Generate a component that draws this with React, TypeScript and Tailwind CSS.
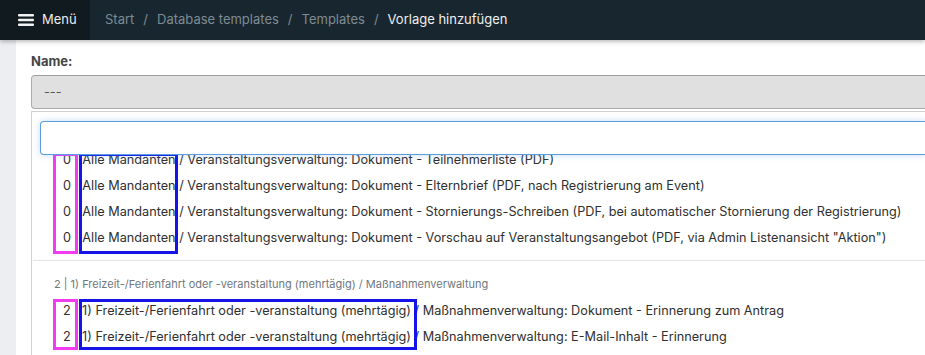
import React from "react";

const groupOne = [
  "0 | Alle Mandanten / Veranstaltungsverwaltung: Dokument - Teilnehmerliste (PDF)",
  "0 | Alle Mandanten / Veranstaltungsverwaltung: Dokument - Elternbrief (PDF, nach Registrierung am Event)",
  "0 | Alle Mandanten / Veranstaltungsverwaltung: Dokument - Stornierungs-Schreiben (PDF, bei automatischer Stornierung der Registrierung)",
  '0 | Alle Mandanten / Veranstaltungsverwaltung: Dokument - Vorschau auf Veranstaltungsangebot (PDF, via Admin Listenansicht "Aktion")',
];

const groupTwo = [
  "2 | 1) Freizeit-/Ferienfahrt oder -veranstaltung (mehrtägig) / Maßnahmenverwaltung: Dokument - Erinnerung zum Antrag",
  "2 | 1) Freizeit-/Ferienfahrt oder -veranstaltung (mehrtägig) / Maßnahmenverwaltung: E-Mail-Inhalt - Erinnerung",
];

function Hamburger() {
  return (
    <svg width="16" height="12" viewBox="0 0 16 12" className="block">
      <rect x="0" y="0" width="16" height="2.4" rx="1" fill="#f2f2f2" />
      <rect x="0" y="4.8" width="16" height="2.4" rx="1" fill="#f2f2f2" />
      <rect x="0" y="9.6" width="16" height="2.4" rx="1" fill="#f2f2f2" />
    </svg>
  );
}

export default function App() {
  return (
    <div className="h-[355px] w-[925px] overflow-hidden bg-[#eceef1] font-['Inter',sans-serif] text-[12.7px] text-[#2f2f2f]">
      {/* top bar */}
      <div className="relative z-10 flex h-10 items-center bg-[#18272f] shadow-[0_2px_4px_rgba(0,0,0,0.25)]">
        <div className="flex h-full w-[90px] items-center gap-[8px] bg-[#111a1f] pl-[18px] text-[13px] text-[#ececec]">
          <Hamburger />
          <span>Menü</span>
        </div>
        <div className="flex items-center pl-[15px] text-[13px] text-[#7e8b92]">
          <span>Start</span>
          <span className="px-[9px]">/</span>
          <span>Database templates</span>
          <span className="px-[9px]">/</span>
          <span>Templates</span>
          <span className="px-[9px]">/</span>
          <span className="text-[#f0f0f0]">Vorlage hinzufügen</span>
        </div>
      </div>

      {/* content */}
      <div className="ml-[16px] h-[315px] bg-white pl-[15px]">
        <div className="pt-[13px] text-[13px] font-bold leading-[16px] text-[#454545]">Name:</div>
        <div className="mt-[6px] flex h-[34px] items-center rounded-l-[4px] border border-r-0 border-[#ababab] border-t-[#a0a0a0] bg-[#e0e0e0] pl-[12px] text-[#555]">
          ---
        </div>

        {/* dropdown */}
        <div className="mt-[2px] h-[300px] border-l border-t border-[#d0d0d0] bg-white">
          <div className="relative z-10 pl-[8px] pt-[9px]">
            <div className="h-[34px] rounded-l-[4px] border border-r-0 border-[#5b9de0] bg-white shadow-[0_0_7px_rgba(91,157,224,0.35)]" />
          </div>
          <div className="relative h-[200px] overflow-hidden">
            <div className="-mt-[8px]">
              <div className="relative pb-[9px]">
                {groupOne.map((t) => (
                  <div key={t} className="h-[26px] whitespace-nowrap pl-[31px] leading-[26px]">
                    {t}
                  </div>
                ))}
                <div className="absolute left-[21px] top-[6px] h-[101px] w-[25px] border-[3px] border-[#f23cf2]" />
                <div className="absolute left-[47px] top-[6px] h-[101px] w-[99px] border-[3px] border-[#1414e8]" />
              </div>
              <div className="relative ml-[1px] border-t border-[#e3e3e3] pt-[16px]">
                <div className="whitespace-nowrap pl-[21px] text-[11px] leading-[14px] text-[#6f7780]">
                  2 | 1) Freizeit-/Ferienfahrt oder -veranstaltung (mehrtägig) / Maßnahmenverwaltung
                </div>
                <div className="mt-[7px]">
                  {groupTwo.map((t) => (
                    <div key={t} className="h-[26px] whitespace-nowrap pl-[30px] leading-[26px]">
                      {t}
                    </div>
                  ))}
                </div>
                <div className="absolute left-[20px] top-[38px] h-[51px] w-[25px] border-[3px] border-[#f23cf2]" />
                <div className="absolute left-[46px] top-[38px] h-[51px] w-[338px] border-[3px] border-[#1414e8]" />
              </div>
            </div>
          </div>
        </div>
      </div>
    </div>
  );
}
